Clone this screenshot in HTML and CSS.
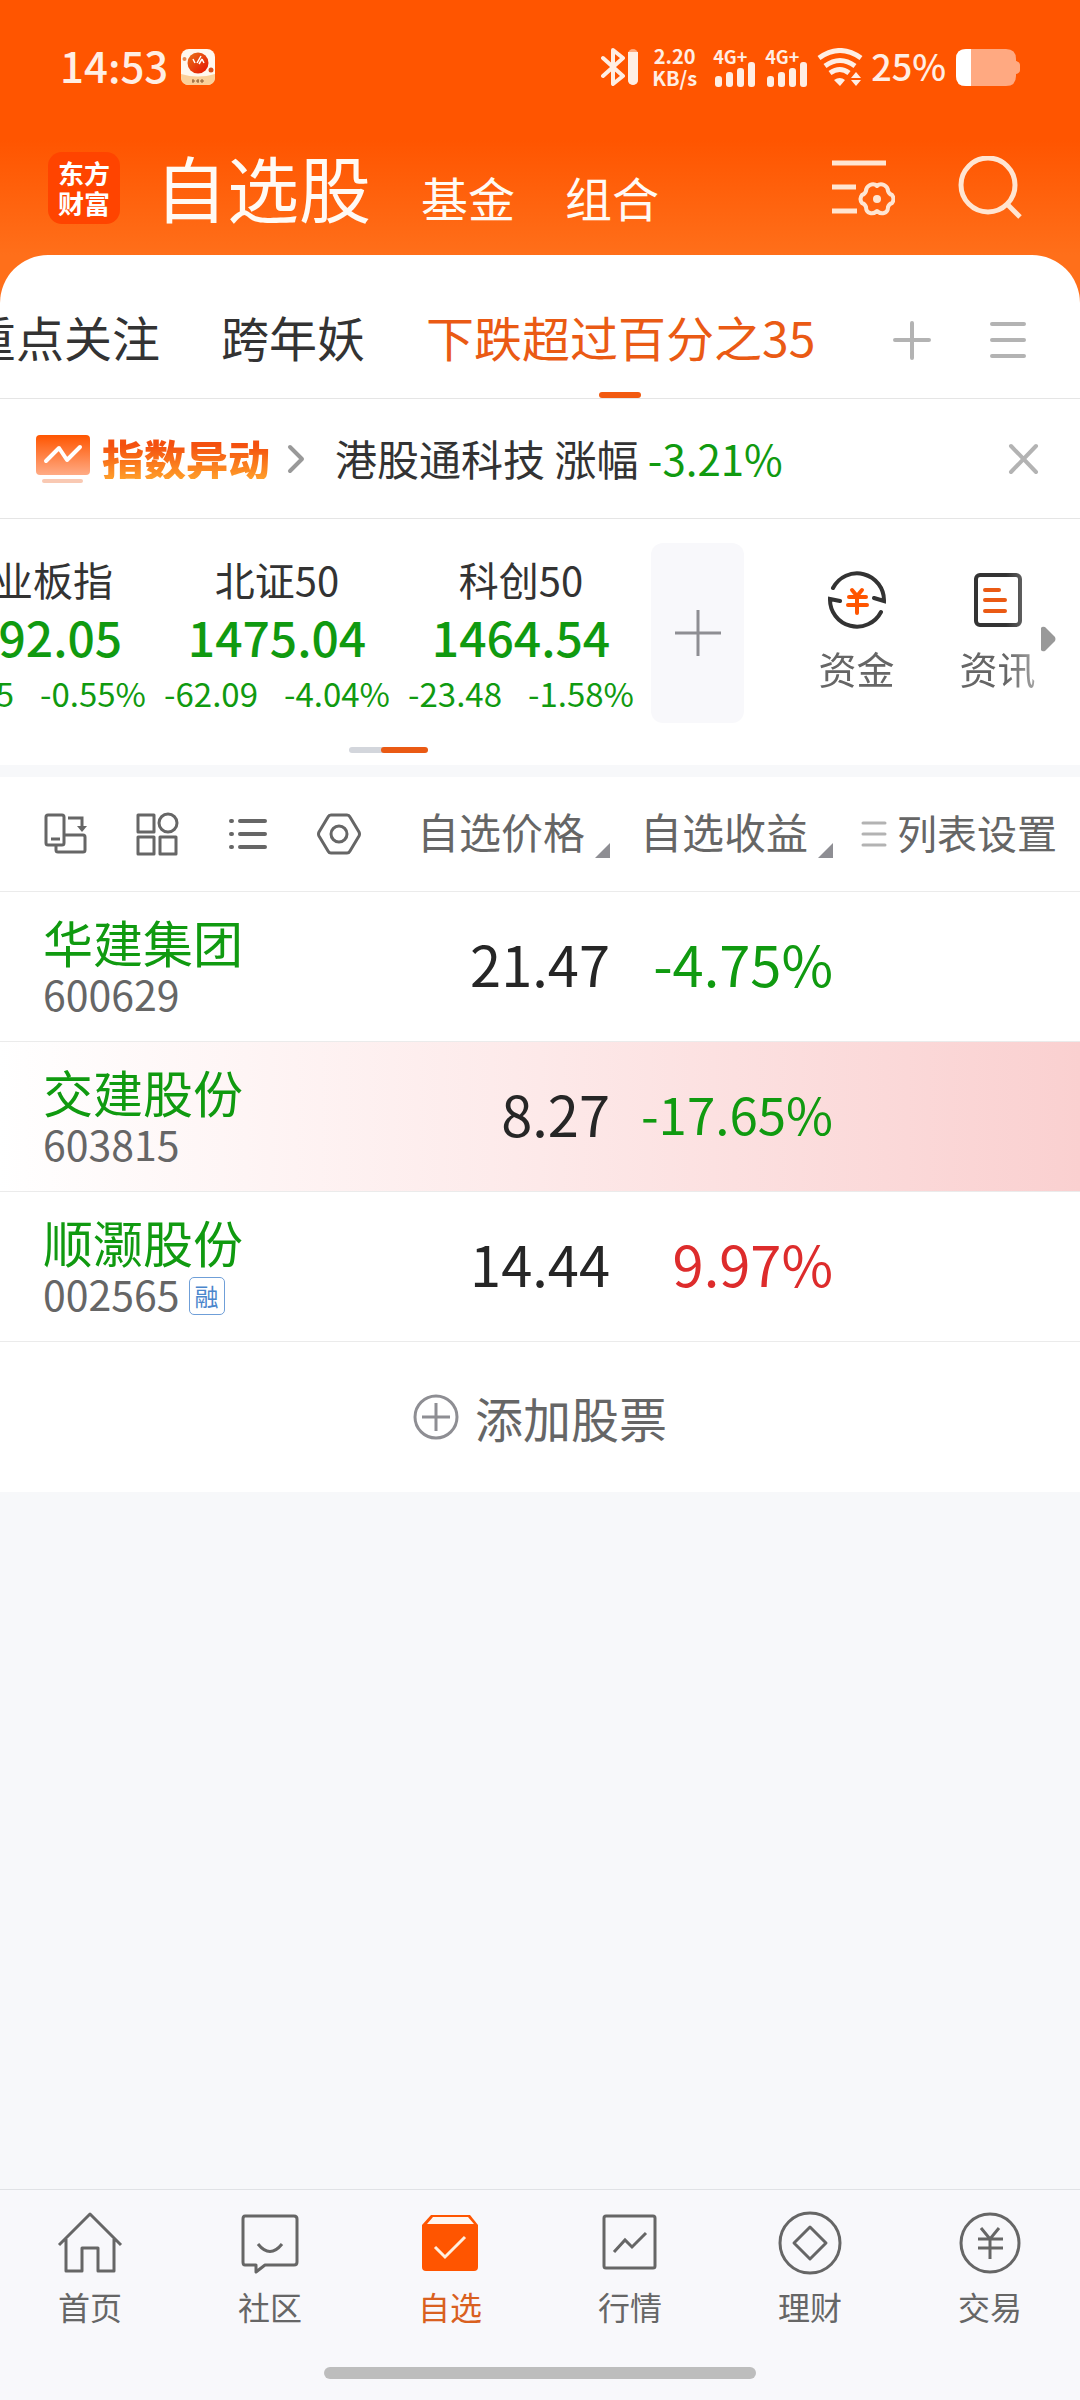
FILE: index.html
```html
<!DOCTYPE html>
<html lang="zh-CN">
<head>
<meta charset="utf-8">
<meta name="viewport" content="width=device-width">
<title>自选股</title>
<link rel="stylesheet" href="styles.css">
</head>
<body>
<header class="top">
  <div class="status">
    <div class="status-left">
      <time>14:53</time>
      <svg width="34" height="36" viewBox="0 0 34 36" aria-hidden="true">
        <defs><linearGradient id="ball" x1="0" y1="0" x2="1" y2="1"><stop offset="0" stop-color="#e8751a"/><stop offset="1" stop-color="#e60f00"/></linearGradient></defs>
        <rect width="34" height="36" rx="8" fill="#fff8ef"/>
        <path d="M0 25Q17 30 34 25V28Q34 36 26 36H8Q0 36 0 28Z" fill="#fbd09a"/>
        <circle cx="17" cy="14" r="10.500" fill="url(#ball)"/>
        <path d="M12 10l2 4M16 14l4-7M18 15l3-5M21 10l2 4" stroke="#fff" stroke-width="1.500" fill="none"/>
        <circle cx="30" cy="21" r="2.500" fill="#d8501e"/><circle cx="3.500" cy="10" r="2" fill="#e88a50"/>
        <path d="M11 32h3m1 0h3m1 0h4M12 30v4M17 30v4M21 30v4" stroke="#8a5a30" stroke-width="1"/>
      </svg>
    </div>
    <div class="status-right">
      <svg width="37" height="38" viewBox="0 0 37 38" aria-hidden="true">
        <path d="M2 10L22 28L12 36V2L22 10L2 28" fill="none" stroke="#ffeee4" stroke-width="4" stroke-linejoin="round" stroke-linecap="round"/>
        <rect x="27" y="1" width="10" height="36" rx="5" fill="#ffeee4" opacity=".55"/><path d="M27 4h10v28a5 5 0 0 1-10 0z" fill="#ffeee4"/>
      </svg>
      <div class="speed"><span>2.20</span><span>KB/s</span></div>
      <div class="signal"><span>4G+</span>
        <svg width="42" height="26" viewBox="0 0 42 26" aria-hidden="true"><g fill="#ffeee4"><rect x="2" y="15" width="7" height="11" rx="3"/><rect x="13" y="11" width="7" height="15" rx="3"/><rect x="24" y="7" width="7" height="19" rx="3"/><rect x="35" y="1" width="7" height="25" rx="3"/></g></svg>
      </div>
      <div class="signal"><span>4G+</span>
        <svg width="42" height="26" viewBox="0 0 42 26" aria-hidden="true"><g fill="#ffeee4"><rect x="2" y="15" width="7" height="11" rx="3"/><rect x="13" y="11" width="7" height="15" rx="3"/><rect x="24" y="7" width="7" height="19" rx="3"/><rect x="35" y="1" width="7" height="25" rx="3"/></g></svg>
      </div>
      <svg width="46" height="38" viewBox="0 0 46 38" aria-hidden="true">
        <path d="M2 10Q23-5 44 10M8 18Q23 7 38 18M13 25Q23 18 32 25" fill="none" stroke="#ffeee4" stroke-width="5"/>
        <path d="M17 32q6-4 11 0l-5 6zM34 30l5-6 5 6zM34 32h10l-5 6z" fill="#ffeee4"/>
      </svg>
      <span class="percent">25%</span>
      <svg width="64" height="37" viewBox="0 0 64 37" aria-hidden="true">
        <path d="M10 0H50Q60 0 60 10V12Q64 13 64 16V21Q64 24 60 25V27Q60 37 50 37H10Q0 37 0 27V10Q0 0 10 0Z" fill="#ffa981"/>
        <path d="M15 0H10Q0 0 0 10V27Q0 37 10 37H15Z" fill="#fff"/>
      </svg>
    </div>
  </div>

  <div class="appbar">
    <a class="logo" href="#" aria-label="东方财富"><span>东方</span><span>财富</span></a>
    <nav class="sections">
      <a class="current" href="#">自选股</a>
      <a href="#">基金</a>
      <a href="#">组合</a>
    </nav>
    <button aria-label="设置">
      <svg width="64" height="64" viewBox="0 0 64 64"><g fill="none" stroke="#ffe5d2" stroke-width="5"><path d="M1 7H55M1 31H25M1 55H26"/><path stroke-linejoin="round" stroke-width="4" d="M46 30q3-3 7-1q4 2 4 6q1 3 4 4q3 4 0 8q-3 1-4 4q0 5-4 6q-4 1-7-2q-3 3-7 2q-4-1-4-6q-1-3-4-4q-3-4 0-8q3-1 4-4q0-4 4-6q4-2 7 1z"/></g><circle cx="46" cy="43" r="4" fill="#ffe5d2"/></svg>
    </button>
    <button aria-label="搜索">
      <svg width="64" height="64" viewBox="0 0 64 64"><g fill="none" stroke="#ffe5d2" stroke-width="5"><circle cx="30" cy="29" r="27"/><path d="M49 48L62 61"/></g></svg>
    </button>
  </div>

  <div class="tabs">
    <nav class="tab-list">
      <a href="#">重点关注</a>
      <a href="#">跨年妖</a>
      <a class="active" href="#">下跌超过百分之35</a>
    </nav>
    <button aria-label="添加分组">
      <svg width="48" height="48" viewBox="0 0 48 48"><path d="M7 24H41M24 7V42" stroke="#b3b3b3" stroke-width="4" stroke-linecap="round"/></svg>
    </button>
    <button aria-label="分组列表">
      <svg width="48" height="48" viewBox="0 0 48 48"><path d="M8 8H40M8 24H40M8 40H40" stroke="#b3b3b3" stroke-width="4" stroke-linecap="round"/></svg>
    </button>
  </div>
</header>

<main>
  <section class="notice">
    <a class="notice-tag" href="#">
      <svg width="56" height="50" viewBox="0 0 56 50" aria-hidden="true">
        <defs><linearGradient id="tag" x1="0" y1="0" x2="0" y2="1"><stop offset="0" stop-color="#ff5500"/><stop offset="1" stop-color="#ffab85"/></linearGradient></defs>
        <rect x="1" y="1" width="54" height="40" rx="4" fill="url(#tag)"/><path d="M11 27L24 14L32 26L45 13" fill="none" stroke="#fff" stroke-width="4" stroke-linecap="round" stroke-linejoin="round"/><rect x="7" y="45" width="41" height="4" rx="2" fill="#f9c9b3"/>
      </svg>
      <strong>指数异动</strong>
      <svg width="18" height="30" viewBox="0 0 18 30" aria-hidden="true"><path d="M3 3L15 15L3 27" fill="none" stroke="#999" stroke-width="4" stroke-linecap="round" stroke-linejoin="round"/></svg>
    </a>
    <p>港股通科技 涨幅 <span class="down">-3.21%</span></p>
    <button aria-label="关闭">
      <svg width="32" height="32" viewBox="0 0 32 32"><path d="M3 3L28 29M28 3L3 29" stroke="#b3b3b3" stroke-width="4" stroke-linecap="round"/></svg>
    </button>
  </section>

  <section class="market">
    <div class="market-row">
      <ul class="indices">
        <li><span class="index-name">创业板指</span><b class="down">3292.05</b><span class="change down"><span>-18.15</span><span>-0.55%</span></span></li>
        <li><span class="index-name">北证50</span><b class="down">1475.04</b><span class="change down"><span>-62.09</span><span>-4.04%</span></span></li>
        <li><span class="index-name">科创50</span><b class="down">1464.54</b><span class="change down"><span>-23.48</span><span>-1.58%</span></span></li>
      </ul>
      <button class="add-index" aria-label="添加指数">
        <svg width="46" height="46" viewBox="0 0 46 46"><path d="M0 23H46M23 0V46" stroke="#8e8e93" stroke-width="3"/></svg>
      </button>
      <nav class="shortcuts">
        <a href="#">
          <svg width="60" height="60" viewBox="0 0 60 60" aria-hidden="true"><g fill="none" stroke="#333" stroke-width="4" stroke-linecap="round"><path d="M6 18A27 27 0 0 1 57 31L47 28"/><path d="M54 42A27 27 0 0 1 3 29L13 31"/></g><path d="M25 20L30 26L35 20M22 27H39M21 35H40M30 26V43" fill="none" stroke="#ff5500" stroke-width="4" stroke-linecap="round"/></svg>
          <span>资金</span>
        </a>
        <a href="#">
          <svg width="60" height="60" viewBox="0 0 60 60" aria-hidden="true"><rect x="8" y="5" width="44" height="50" rx="4" fill="none" stroke="#333" stroke-width="4"/><path d="M17 20H31M17 30H37M17 41H37" stroke="#ea5a14" stroke-width="4" stroke-linecap="round"/></svg>
          <span>资讯</span>
        </a>
      </nav>
      <svg class="more" width="16" height="26" viewBox="0 0 16 26" aria-hidden="true"><path d="M1 2Q2 0 5 1L15 11Q16 13 15 15L5 25Q2 26 1 24Z" fill="#999"/></svg>
    </div>
    <div class="pager"><i></i><i class="on"></i></div>
  </section>

  <table class="stocks">
    <colgroup><col><col class="c-price"><col class="c-gain"><col class="c-set"></colgroup>
    <thead>
      <tr>
        <th>
          <div class="tools">
            <button aria-label="横屏"><svg width="44" height="44" viewBox="0 0 44 44"><g fill="none" stroke="#666" stroke-width="3"><rect x="2" y="3" width="18" height="30" rx="2"/><path d="M7 27H16M20 23H39Q41 23 41 25V38Q41 40 39 40H14Q12 40 12 38V33M24 6H38V16"/></g><path d="M33 14H43L38 20Z" fill="#666"/></svg></button>
            <button aria-label="宫格"><svg width="44" height="44" viewBox="0 0 44 44"><g fill="none" stroke="#666" stroke-width="3" stroke-linejoin="round"><rect x="3" y="3" width="16" height="17"/><circle cx="33" cy="11" r="9"/><rect x="3" y="25" width="16" height="17"/><rect x="25" y="25" width="16" height="17"/></g></svg></button>
            <button aria-label="列表"><svg width="44" height="44" viewBox="0 0 44 44"><path d="M14 9H39M14 22H39M14 35H39M5 9h1M5 22h1M5 35h1" stroke="#666" stroke-width="4" stroke-linecap="round"/></svg></button>
            <button aria-label="选项"><svg width="44" height="44" viewBox="0 0 44 44"><g fill="none" stroke="#666"><path stroke-width="3" stroke-linejoin="round" d="M14 3H30Q32 3 33 5L42 20Q43 22 42 24L33 39Q32 41 30 41H14Q12 41 11 39L2 24Q1 22 2 20L11 5Q12 3 14 3Z"/><circle cx="22" cy="22" r="8" stroke-width="3"/></g></svg></button>
          </div>
        </th>
        <th><button class="sort">自选价格<svg width="15" height="15" viewBox="0 0 15 15" aria-hidden="true"><path d="M15 0V15H0Z" fill="#8e8e93"/></svg></button></th>
        <th><button class="sort">自选收益<svg width="15" height="15" viewBox="0 0 15 15" aria-hidden="true"><path d="M15 0V15H0Z" fill="#8e8e93"/></svg></button></th>
        <th><button class="set"><svg width="26" height="28" viewBox="0 0 26 28" aria-hidden="true"><path d="M2 3H24M2 14H24M2 25H24" stroke="#b3b3b3" stroke-width="3" stroke-linecap="round"/></svg>列表设置</button></th>
      </tr>
    </thead>
    <tbody>
      <tr><td class="stock"><b>华建集团</b><span class="code">600629</span></td><td>21.47</td><td class="down">-4.75%</td><td></td></tr>
      <tr class="flash"><td class="stock"><b>交建股份</b><span class="code">603815</span></td><td>8.27</td><td class="down long">-17.65%</td><td></td></tr>
      <tr><td class="stock"><b>顺灏股份</b><span class="code">002565<em>融</em></span></td><td>14.44</td><td class="up">9.97%</td><td></td></tr>
    </tbody>
  </table>
  <button class="add-stock">
    <svg width="46" height="46" viewBox="0 0 46 46" aria-hidden="true"><g fill="none" stroke="#8e8e93" stroke-width="3"><circle cx="23" cy="23" r="21"/><path d="M9 23H37M23 9V37"/></g></svg>
    添加股票
  </button>
</main>

<footer class="bottom">
  <nav>
    <a href="#"><svg width="66" height="66" viewBox="0 0 66 66" aria-hidden="true"><path d="M2 35L33 4L64 35M9 29V61H25V38H41V61H57V29" fill="none" stroke="#666" stroke-width="3" stroke-linejoin="round"/></svg><span>首页</span></a>
    <a href="#"><svg width="66" height="66" viewBox="0 0 66 66" aria-hidden="true"><path d="M8 6H57Q60 6 60 9V52Q60 55 57 55H28L19 62V55H8Q6 55 6 52V9Q6 6 8 6Z" fill="none" stroke="#666" stroke-width="3" stroke-linejoin="round"/><path d="M21 34Q33 49 45 34" fill="none" stroke="#666" stroke-width="3"/></svg><span>社区</span></a>
    <a class="active" href="#"><svg width="66" height="66" viewBox="0 0 66 66" aria-hidden="true"><path d="M5 15L14 5H53L61 15V57Q61 61 57 61H9Q5 61 5 57Z" fill="#ff5500"/><path d="M10 14L16 7H51L57 14Z" fill="#fff6ef"/><path d="M18 37L28 47L48 27" fill="none" stroke="#ffeedd" stroke-width="3"/></svg><span>自选</span></a>
    <a href="#"><svg width="66" height="66" viewBox="0 0 66 66" aria-hidden="true"><g fill="none" stroke="#666" stroke-width="3"><rect x="7" y="6" width="51" height="52" rx="2"/><path d="M17 42L28 30L35 37L49 23"/></g></svg><span>行情</span></a>
    <a href="#"><svg width="66" height="66" viewBox="0 0 66 66" aria-hidden="true"><g fill="none" stroke="#666" stroke-width="3" stroke-linejoin="round"><circle cx="33" cy="33" r="30"/><path d="M33 17L49 33L33 49L17 33Z"/></g></svg><span>理财</span></a>
    <a href="#"><svg width="66" height="66" viewBox="0 0 66 66" aria-hidden="true"><g fill="none" stroke="#666" stroke-width="3"><circle cx="33" cy="33" r="29"/><path d="M24 18L33 29L42 18M21 29H46M21 38H46M33 29V49"/></g></svg><span>交易</span></a>
  </nav>
  <div class="home-bar"></div>
</footer>
</body>
</html>
```

FILE: styles.css
```css
* {
  box-sizing: border-box;
}

body {
  margin: 0;
  min-height: 100vh;
  display: flex;
  flex-direction: column;
  background: #f7f8fa;
  color: #333;
  font-family: "Noto Sans CJK SC", "Noto Sans", sans-serif;
  font-size: 42px;
  line-height: 1;
}

a {
  color: inherit;
  text-decoration: none;
}

button {
  padding: 0;
  border: 0;
  background: none;
  color: inherit;
  font: inherit;
}

svg {
  display: block;
  flex: none;
}

.down {
  color: #109a10;
}

.up {
  color: #dd2c2c;
}

/* Header */

.top {
  background: linear-gradient(#ff5500 140px, #ff6f1a 255px);
}

.status {
  display: flex;
  justify-content: space-between;
  align-items: center;
  height: 134px;
  padding: 0 60px;
  color: #ffeee4;
  font-weight: 500;
}

.status time,
.percent {
  padding-bottom: 4px;
}

.status-left,
.status-right {
  display: flex;
  align-items: center;
}

.status-left {
  gap: 16px;
}

.status-left svg {
  margin-left: -3px;
}

.speed {
  display: flex;
  flex-direction: column;
  align-items: center;
  margin: 0 16px 0 14px;
  font-size: 20px;
  line-height: 22px;
  font-weight: 700;
}

.signal {
  display: flex;
  flex-direction: column;
  height: 40px;
  margin-right: 10px;
  font-size: 18px;
  line-height: 18px;
  font-weight: 700;
}

.signal svg {
  margin-top: -4px;
}

.percent {
  margin: 0 10px 0 8px;
  font-size: 36px;
}

.appbar {
  display: flex;
  align-items: center;
  gap: 63px;
  height: 121px;
  padding: 0 58px 14px 48px;
}

.logo {
  display: flex;
  flex-direction: column;
  justify-content: center;
  align-items: center;
  width: 72px;
  height: 72px;
  border-radius: 14px;
  background: #ff4400;
  color: #fff;
  font-size: 26px;
  line-height: 30px;
  font-weight: 700;
}

.sections {
  display: flex;
  align-items: baseline;
  gap: 50px;
  flex: 1;
  margin-left: -28px;
  padding-bottom: 4px;
  color: #fffaf4;
  font-size: 47px;
}

.sections .current {
  font-size: 72px;
}

.tabs {
  display: flex;
  align-items: center;
  gap: 48px;
  height: 144px;
  padding: 0 48px 0 0;
  border-bottom: 1px solid #e5e5e5;
  border-radius: 48px 48px 0 0;
  background: #fff;
}

.tabs > button {
  margin-top: 26px;
}

.tab-list {
  display: flex;
  flex: 1;
  gap: 61px;
  overflow: hidden;
  font-size: 48px;
}

.tab-list a {
  flex: none;
  position: relative;
  height: 143px;
  padding-top: 22px;
  line-height: 118px;
}

.tab-list a:first-child {
  margin-left: -32px;
}

.tab-list .active {
  color: #ea5a14;
}

.tab-list .active::after {
  content: "";
  position: absolute;
  left: 50%;
  bottom: 0;
  width: 42px;
  height: 6px;
  margin-left: -22px;
  border-radius: 3px;
  background: #f25a10;
}

/* Notice line */

.notice {
  display: flex;
  align-items: center;
  height: 120px;
  padding: 0 40px 0 35px;
  border-bottom: 1px solid #e5e5e5;
  background: #fff;
}

.notice-tag {
  display: flex;
  align-items: center;
  gap: 11px;
}

.notice-tag strong {
  margin: 0 6px 2px 0;
  background: linear-gradient(#f4500f 20%, #ff9e2a);
  background-clip: text;
  color: transparent;
  font-weight: 900;
}

.notice p {
  flex: 1;
  margin: 0 0 2px 30px;
}

/* Index strip */

.market {
  padding: 24px 0 12px;
  border-bottom: 12px solid #f7f8fa;
  background: #fff;
}

.market-row {
  position: relative;
  display: flex;
}

.indices {
  display: flex;
  flex: none;
  margin: 0 8px 0 -89px;
  padding: 8px 0 0;
  list-style: none;
}

.indices li {
  display: flex;
  flex-direction: column;
  align-items: center;
  width: 244px;
  line-height: 57px;
}

.index-name {
  font-size: 40px;
}

.indices b {
  font-size: 48px;
  font-weight: 500;
}

.change {
  display: flex;
  gap: 26px;
  font-size: 33px;
}

.add-index {
  display: flex;
  flex: none;
  justify-content: center;
  align-items: center;
  width: 93px;
  height: 180px;
  border-radius: 12px;
  background: #f8f8fb;
}

.shortcuts {
  display: flex;
  flex: 1;
  padding: 27px 12px 0 42px;
  -webkit-mask-image: linear-gradient(90deg, #000 78%, transparent);
  mask-image: linear-gradient(90deg, #000 78%, transparent);
  color: #666;
  font-size: 38px;
}

.shortcuts a {
  display: flex;
  flex: 1;
  flex-direction: column;
  align-items: center;
  gap: 19px;
}

.more {
  position: absolute;
  right: 24px;
  top: 83px;
}

.pager {
  display: flex;
  justify-content: center;
  margin: 24px 28% 0 0;
}

.pager i {
  width: 40px;
  height: 6px;
  margin-right: -8px;
  border-radius: 3px;
  background: #d3d6dc;
}

.pager .on {
  width: 47px;
  margin: 0;
  background: #ea5a14;
}

/* Watch list */

.stocks {
  width: 100%;
  border-collapse: collapse;
  table-layout: fixed;
  background: #fff;
}

.c-price {
  width: 210px;
}

.c-gain {
  width: 223px;
}

.c-set {
  width: 247px;
}

.stocks th,
.stocks td {
  padding: 0;
  border-bottom: 1px solid #ebebeb;
  font-weight: 400;
  text-align: right;
  white-space: nowrap;
}

.stocks th {
  height: 114px;
  color: #666;
}

.stocks td {
  height: 150px;
  padding-bottom: 6px;
  color: #262626;
  font-size: 56px;
}

.stocks td.down {
  color: #109a10;
}

.stocks td.up {
  color: #dd2c2c;
}

.stocks td.long {
  font-size: 51px;
}

.stocks td.stock {
  padding: 0 0 0 43px;
  text-align: left;
}

.stock b {
  display: block;
  color: #109a10;
  font-size: 50px;
  line-height: 54px;
  font-weight: 400;
}

.stock .code {
  display: flex;
  align-items: center;
  gap: 9px;
  height: 50px;
  color: #666;
  font-size: 41px;
}

.code em {
  margin-top: 5px;
  padding: 5px;
  border: 1px solid #6f9fd8;
  border-radius: 5px;
  color: #4a86cc;
  font-size: 24px;
  line-height: 26px;
  font-style: normal;
}

.flash {
  background: linear-gradient(90deg, #fff, #fde9e9 50%, #fad0d0);
}

.tools {
  display: flex;
  gap: 47px;
  padding-left: 44px;
}

.sort {
  display: inline-flex;
  align-items: flex-end;
  gap: 10px;
  padding-bottom: 6px;
}

.sort svg {
  margin-bottom: -6px;
}

.set {
  display: flex;
  align-items: center;
  gap: 10px;
  margin-left: 28px;
  padding-bottom: 4px;
  font-size: 40px;
}

.set svg {
  margin-top: 4px;
}

.add-stock {
  display: flex;
  justify-content: center;
  align-items: center;
  gap: 16px;
  width: 100%;
  height: 150px;
  background: #fff;
  color: #666;
  font-size: 48px;
}

/* Bottom navigation */

.bottom {
  margin-top: auto;
  padding: 20px 0 21px;
  border-top: 1px solid #e0e2e5;
  background: #f8f8fb;
  color: #666;
  font-size: 32px;
}

.bottom nav {
  display: flex;
}

.bottom a {
  display: flex;
  flex: 1;
  flex-direction: column;
  align-items: center;
  gap: 14px;
}

.bottom .active {
  color: #d9601f;
}

.home-bar {
  width: 40%;
  height: 12px;
  margin: 45px auto 0;
  border-radius: 6px;
  background: #bdbdbd;
}
```
